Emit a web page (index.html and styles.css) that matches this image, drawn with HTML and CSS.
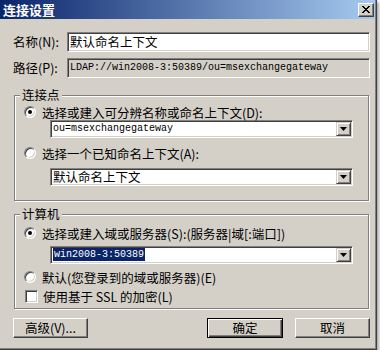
FILE: index.html
```html
<!DOCTYPE html>
<html lang="zh-CN">
<head>
    <meta charset="UTF-8">
    <title>连接设置</title>
    <link rel="stylesheet" href="styles.css">
</head>
<body>
    <div class="window">
        <!-- 标题栏 -->
        <div class="titlebar">
            <span class="title">连接设置</span>
            <span class="close-btn">
                <svg width="8" height="7" viewBox="0 0 8 7" shape-rendering="crispEdges"><path d="M0 0H2L4 2.5L6 0H8L5 3.5L8 7H6L4 4.5L2 7H0L3 3.5Z" fill="#000"/></svg>
            </span>
        </div>

        <div class="field-row first">
            <span class="field-label">名称(N):</span>
            <div class="textbox">默认命名上下文</div>
        </div>
        <div class="field-row">
            <span class="field-label">路径(P):</span>
            <div class="textbox readonly mono">LDAP://win2008-3:50389/ou=msexchangegateway</div>
        </div>

        <fieldset class="group group-point">
            <legend>连接点</legend>
            <div class="option row-1"><span class="radio checked"></span>选择或建入可分辨名称或命名上下文(D):</div>
            <div class="combo">
                <span class="combo-text mono">ou=msexchangegateway</span>
                <span class="drop-btn"><svg width="7" height="4" viewBox="0 0 7 4"><polygon points="0,0 7,0 3.5,4" fill="#000"/></svg></span>
            </div>
            <div class="option row-2"><span class="radio"></span>选择一个已知命名上下文(A):</div>
            <div class="combo combo-2">
                <span class="combo-text">默认命名上下文</span>
                <span class="drop-btn"><svg width="7" height="4" viewBox="0 0 7 4"><polygon points="0,0 7,0 3.5,4" fill="#000"/></svg></span>
            </div>
        </fieldset>

        <fieldset class="group group-computer">
            <legend>计算机</legend>
            <div class="option row-3"><span class="radio checked"></span>选择或建入域或服务器(S):(服务器|域[:端口])</div>
            <div class="combo combo-3">
                <span class="combo-text mono"><span class="selected">win2008-3:50389</span></span>
                <span class="drop-btn"><svg width="7" height="4" viewBox="0 0 7 4"><polygon points="0,0 7,0 3.5,4" fill="#000"/></svg></span>
            </div>
            <div class="option row-4"><span class="radio"></span>默认(您登录到的域或服务器)(E)</div>
            <div class="option row-5"><span class="checkbox"></span>使用基于 SSL 的加密(L)</div>
        </fieldset>

        <div class="buttons">
            <button class="button">高级(V)...</button>
            <button class="button default">确定</button>
            <button class="button cancel">取消</button>
        </div>
    </div>
</body>
</html>
```

FILE: styles.css
```css
* {
    box-sizing: border-box;
}
body {
    margin: 0;
    background: #ffffff;
    font-family: "Noto Sans CJK SC", sans-serif;
    font-size: 12.5px;
    color: #000;
}
.mono {
    font-family: "Liberation Mono", "Noto Sans CJK SC", monospace;
    font-size: 10px;
}
.window {
    width: 377px;
    height: 350px;
    background: #d4d0c8;
    border-right: 1px solid #404040;
    border-bottom: 1px solid #404040;
    box-shadow: inset -1px -1px 0 #808080, 2px 2px 3px rgba(0, 0, 0, 0.35);
    display: flex;
    flex-direction: column;
}
.titlebar {
    height: 19px;
    margin-right: 1px;
    padding: 0 1px 0 3px;
    background: linear-gradient(to right, #0a246a, #a6caf0);
    display: flex;
    align-items: center;
    justify-content: space-between;
}
.title {
    color: #fff;
    font-weight: bold;
    font-size: 13px;
    line-height: 19px;
}
.close-btn {
    width: 16px;
    height: 14px;
    background: #d4d0c8;
    border: 1px solid;
    border-color: #fff #404040 #404040 #fff;
    box-shadow: inset -1px -1px 0 #808080;
    display: flex;
    align-items: center;
    justify-content: center;
}
.close-btn svg {
    display: block;
}

/* 名称 / 路径 */
.field-row {
    display: flex;
    align-items: center;
    padding-left: 13px;
    margin-top: 6px;
}
.field-row.first {
    margin-top: 13px;
}
.field-label {
    width: 54px;
    line-height: 20px;
}
.textbox {
    width: 303px;
    height: 20px;
    padding: 0 2px;
    line-height: 18px;
    background: #fff;
    border: 1px solid;
    border-color: #808080 #fff #fff #808080;
    box-shadow: inset 1px 1px 0 #404040, inset -1px -1px 0 #d4d0c8;
    white-space: nowrap;
    overflow: hidden;
}
.textbox.readonly {
    background: #d4d0c8;
}

/* 分组框 */
.group {
    margin: 10px 0 0 14px;
    width: 355px;
    min-width: 0;
    padding: 0 0 14px 0;
    border: 1px solid #808080;
    box-shadow: inset 1px 1px 0 #fff, 1px 1px 0 #fff;
}
.group legend {
    margin-left: 5px;
    padding: 0 2px;
    line-height: 14px;
    background: #d4d0c8;
}
.group-computer {
    margin-top: 6px;
    padding-bottom: 4px;
}
.option {
    display: flex;
    align-items: center;
    gap: 6px;
    height: 16px;
    margin-left: 9px;
    white-space: nowrap;
}
.row-1 { margin-top: 2px; }
.row-2 { margin-top: 7px; }
.row-3 { margin-top: 4px; }
.row-4 { margin-top: 5px; }
.row-5 { margin-top: 3px; margin-left: 10px; gap: 5px; }

.radio {
    position: relative;
    flex: none;
    width: 12px;
    height: 12px;
    border-radius: 50%;
    background: #fff;
    border: 1px solid;
    border-color: #808080 #fff #fff #808080;
    box-shadow: inset 1px 1px 0 #404040, inset -1px -1px 0 #d4d0c8;
}
.radio.checked::after {
    content: "";
    position: absolute;
    left: 3px;
    top: 3px;
    width: 4px;
    height: 4px;
    border-radius: 50%;
    background: #000;
}
.checkbox {
    flex: none;
    width: 13px;
    height: 13px;
    background: #fff;
    border: 1px solid;
    border-color: #808080 #fff #fff #808080;
    box-shadow: inset 1px 1px 0 #404040, inset -1px -1px 0 #d4d0c8;
}

/* 下拉框 */
.combo {
    display: flex;
    align-items: center;
    width: 303px;
    height: 18px;
    margin-left: 35px;
    background: #fff;
    border: 1px solid;
    border-color: #808080 #fff #fff #808080;
    box-shadow: inset 1px 1px 0 #404040, inset -1px -1px 0 #d4d0c8;
}
.combo-2 { margin-top: 7px; }
.combo-3 { margin-top: 5px; }
.combo-text {
    flex: 1;
    padding-left: 2px;
    line-height: 16px;
    white-space: nowrap;
}
.selected {
    background: #0a246a;
    color: #fff;
    padding: 1px 1px;
}
.drop-btn {
    width: 15px;
    height: 14px;
    margin-right: 1px;
    background: #d4d0c8;
    border: 1px solid;
    border-color: #d4d0c8 #404040 #404040 #d4d0c8;
    box-shadow: inset 1px 1px 0 #fff, inset -1px -1px 0 #808080;
    display: flex;
    align-items: center;
    justify-content: center;
}
.drop-btn svg {
    display: block;
}

/* 按钮 */
.buttons {
    display: flex;
    margin-top: 9px;
    padding: 0 6px 0 13px;
}
.button {
    width: 75px;
    height: 20px;
    padding: 0;
    font-family: "Noto Sans CJK SC", sans-serif;
    font-size: 12.5px;
    line-height: 16px;
    color: #000;
    background: #d4d0c8;
    border: 1px solid;
    border-color: #fff #404040 #404040 #fff;
    box-shadow: inset -1px -1px 0 #808080;
}
.button.default {
    width: 76px;
    margin-left: auto;
    border-color: #000;
    box-shadow: inset 1px 1px 0 #fff, inset -1px -1px 0 #404040, inset -2px -2px 0 #808080;
}
.button.cancel {
    margin-left: 12px;
}
```
